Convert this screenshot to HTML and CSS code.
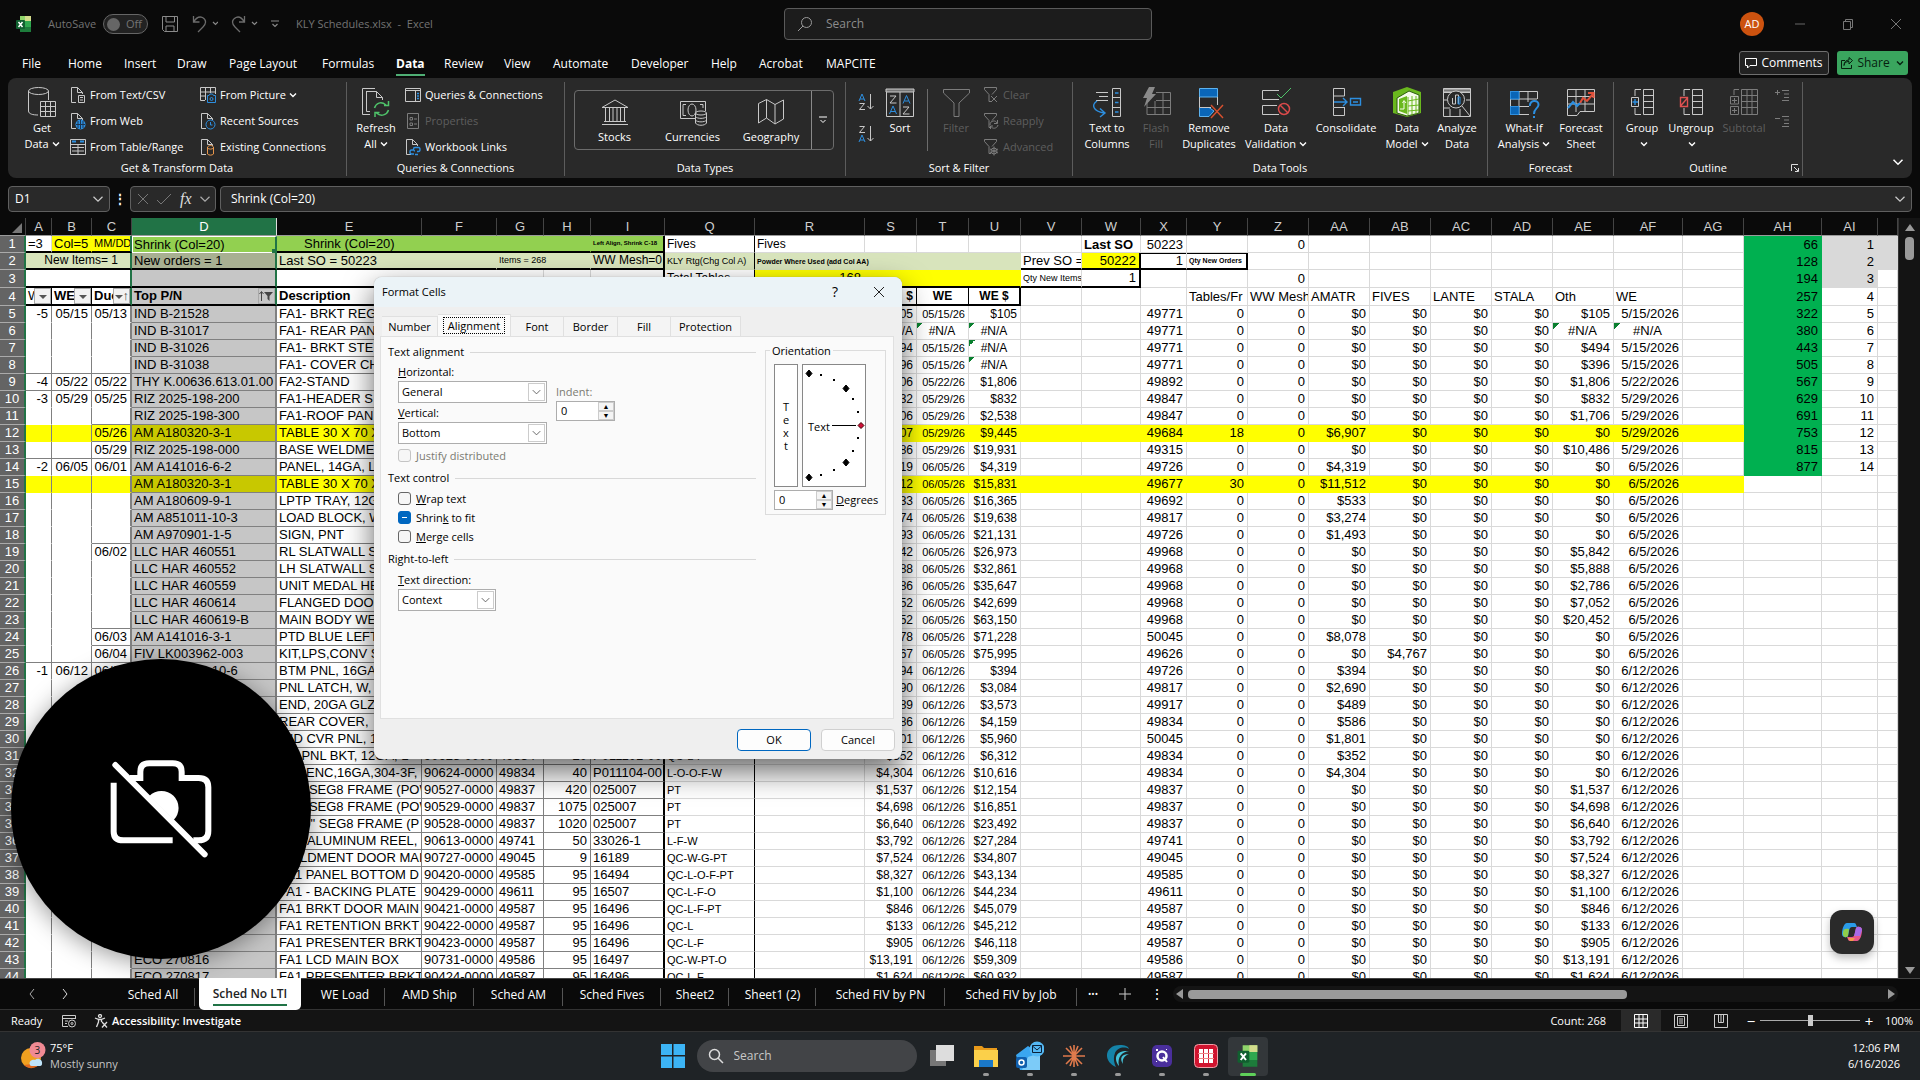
FILE: index.html
```html
<!DOCTYPE html>
<html lang="en">
<head>
<meta charset="utf-8">
<title>KLY Schedules.xlsx - Excel</title>
<link rel="stylesheet" href="styles.css">
</head>
<body>
<svg class="defs" aria-hidden="true">
  <symbol id="chev" viewBox="0 0 8 8"><path class="chev-line" d="M1 2.5 4 5.5 7 2.5" fill="none" stroke="currentColor"/></symbol>
  <symbol id="doc" viewBox="0 0 16 18"><path d="M6 16.500H1.500V1.500H7.500L12.500 6.500V8M7.500 1.500V6.500H12.500" fill="none" stroke="#c8c8c8"/></symbol>
  <symbol id="funnel" viewBox="0 0 16 18"><path d="M1.500 1.500H13.500V3.500L9 8.500M1.500 1.500V3.500L6 8.500V15.500H8" fill="none" stroke="#7c7c7c"/></symbol>
  <symbol id="excel" viewBox="0 0 16 18"><path d="M4 1h11v5H4z" fill="#8fd46a"/><path d="M9 1h6v5H9z" fill="#d3dc8c"/><path d="M4 6h11v6H4z" fill="#2fa84f"/><path d="M4 12h11v5H4z" fill="#1d7c3b"/><rect y="5" width="9" height="9" rx="1" fill="#10602f"/><path d="M2.500 7 6.500 12M6.500 7 2.500 12" stroke="#fff" stroke-width="1.500"/></symbol>
</svg>

<header class="titlebar">
  <svg class="app-icon" viewBox="0 0 16 18"><use href="#excel"/></svg>
  <span class="autosave">AutoSave</span>
  <button class="toggle"><i></i>Off</button>
  <div class="quick">
    <button aria-label="Save"><svg width="18" height="18" viewBox="0 0 18 18"><path d="M1.500 1.500H16.500V16.500H3.500L1.500 14.500ZM5 1.500V7H13.500V1.500M5 16.500V11H13V16.500" fill="none" stroke="#8a8a8a"/></svg></button>
    <button aria-label="Undo"><svg width="26" height="18" viewBox="0 0 26 18"><path d="M1.500 1V7H7.500M1.500 7C4 3 7 1 10.500 2.500 15 5 14 9 11 12L6 17" fill="none" stroke="#6c6c6c" stroke-width="1.300"/><path d="M21 7 23.500 9.500 26 7" fill="none" stroke="#8a8a8a" stroke-width="1.200"/></svg></button>
    <button aria-label="Redo"><svg width="27" height="18" viewBox="0 0 27 18"><path d="M13.500 1V7H8M13.500 7C11 3 8 1 5 2.500 0 5 1 9 4 12L9 17" fill="none" stroke="#6c6c6c" stroke-width="1.300"/><path d="M21 7 23.500 9.500 26 7" fill="none" stroke="#8a8a8a" stroke-width="1.200"/></svg></button>
    <button aria-label="Customize"><svg width="8" height="8" viewBox="0 0 8 8"><path d="M0 1H8M1.500 4 4 6.500 6.500 4" fill="none" stroke="#8a8a8a" stroke-width="1.200"/></svg></button>
  </div>
  <h1 class="doc-title">KLY Schedules.xlsx&nbsp; -&nbsp; Excel</h1>
  <label class="top-search"><svg width="16" height="16" viewBox="0 0 16 16"><circle cx="9.500" cy="6.500" r="5" fill="none" stroke="#9a9a9a"/><path d="M6 10 1 15" stroke="#9a9a9a"/></svg><input placeholder="Search" aria-label="Search commands"></label>
  <div class="window-tools">
    <span class="avatar">AD</span>
    <button aria-label="Minimize"><svg width="12" height="12"><path d="M1 6H11" stroke="#666"/></svg></button>
    <button aria-label="Restore"><svg width="12" height="12" fill="none" stroke="#777"><path d="M1.500 3.500h7v8h-7zM3.500 3V1.500h7v8H9"/></svg></button>
    <button aria-label="Close"><svg width="12" height="12"><path d="M1 1 11 11M11 1 1 11" stroke="#777"/></svg></button>
  </div>
</header>

<nav class="ribbon-tabs">
  <div class="tab-list">
    <a href="#">File</a><a href="#">Home</a><a href="#">Insert</a><a href="#">Draw</a><a href="#">Page Layout</a><a href="#">Formulas</a><a href="#" class="on">Data</a><a href="#">Review</a><a href="#">View</a><a href="#">Automate</a><a href="#">Developer</a><a href="#">Help</a><a href="#">Acrobat</a><a href="#">MAPCITE</a>
  </div>
  <button class="comments"><svg width="12" height="12" viewBox="0 0 12 12"><path d="M.5 1.500H11.500V8.500H5L2.500 11V8.500H.5Z" fill="none" stroke="#fff"/></svg>Comments</button>
  <button class="share"><svg width="12" height="12" viewBox="0 0 12 12"><path d="M4 3.500H.5V11.500H10.500V8M3 8.500C3.500 5.500 5 4.500 8 4.500V7L11.500 3.500 8 .5V3C5 3 3 5 3 8.500Z" fill="none" stroke="#06210f"/></svg>Share<svg class="chev"><use href="#chev"/></svg></button>
</nav>

<section class="ribbon">
  <div class="group g-get">
    <div class="row">
      <button class="big"><svg viewBox="0 0 30 30"><ellipse cx="11.500" cy="4" rx="10" ry="3.500"/><path d="M1.500 4V24C1.500 27 6 28 11 28M21.500 4V13"/><path d="M13.500 14.500H28.500V29.500H13.500ZM13.500 19.500H28.500M13.500 24.500H28.500M18.500 14.500V29.500M23.500 14.500V29.500"/></svg><span>Get<br>Data<svg class="chev"><use href="#chev"/></svg></span></button>
      <div class="smalls">
        <button><svg viewBox="0 0 16 18"><use href="#doc"/><path d="M8.500 9.500H14.500V16.500H8.500ZM10 11.500H13M10 14H13"/></svg>From Text/CSV</button>
        <button><svg viewBox="0 0 16 18"><use href="#doc"/><circle cx="10.500" cy="12.500" r="5" fill="#2d8fe0" stroke="none"/><path d="M6 12.500H15M10.500 8V17M8 9V16M13 9V16" stroke="#1b3550"/></svg>From Web</button>
        <button><svg viewBox="0 0 16 18"><path d="M.5 1.500H15.500V16.500H.5ZM.5 6.500H15.500M2 9.500H14M2 13H14M8 6V16"/><path d="M2 3.500H6M10 3.500H14" stroke="#2d8fe0" stroke-width="2"/></svg>From Table/Range</button>
      </div>
      <div class="smalls">
        <button><svg viewBox="0 0 16 18"><path d="M.5 1.500H15.500V8M.5 1.500V14.500H5M.5 6H15M.5 10H5M5.500 1V14M10.500 1V7"/><path d="M7.500 9.500H9L10 8H12.500L13.500 9.500H15.500V16.500H7.500Z" stroke="#2d8fe0"/><circle cx="11.500" cy="13" r="1.500" stroke="#2d8fe0"/></svg>From Picture<svg class="chev"><use href="#chev"/></svg></button>
        <button><svg viewBox="0 0 16 18"><use href="#doc"/><circle cx="10.500" cy="12.500" r="4.500" fill="#292929" stroke="#2d8fe0"/><path d="M10.500 10V13H12.500" stroke="#2d8fe0"/></svg>Recent Sources</button>
        <button><svg viewBox="0 0 16 18"><use href="#doc"/><path d="M7.500 9V16C9 17.500 12 17.500 13.500 16V9C12 7 9 7 7.500 9ZM7.500 10C9 11.500 12 11.500 13.500 10" stroke="#e8964a"/></svg>Existing Connections</button>
      </div>
    </div>
    <div class="caption">Get &amp; Transform Data</div>
  </div>
  <div class="group g-query">
    <div class="row">
      <button class="big"><svg viewBox="0 0 30 30"><path d="M9 27.500H1.500V1.500H14M9 24.500H5.500V4M5.500 5.500V4.500H15.500L21.500 10.500V13M15.500 4.500V10.500H21.500"/><path d="M13.500 21C15 16 20 14 25 18M27.500 14V18.500H23M27.500 23C26 28 20 30 15.500 26M14 30V25.500H18.500" stroke="#4fc36a" stroke-width="1.500"/></svg><span>Refresh<br>All<svg class="chev"><use href="#chev"/></svg></span></button>
      <div class="smalls">
        <button><svg viewBox="0 0 16 18"><path d="M.5 2.500H15.500V15.500H.5ZM.5 4.500H15.500M10.500 4V15"/><path d="M12 7.500H14M12 10H14M12 12.500H14" stroke="#2d8fe0" stroke-width="1.500"/></svg>Queries &amp; Connections</button>
        <button class="off"><svg viewBox="0 0 16 18"><path d="M2.500 1.500H13.500V16.500H2.500ZM5 5.500H7.500V8H5ZM5 11H7.500V13.500H5ZM9 7H12M9 12H12"/></svg>Properties</button>
        <button><svg viewBox="0 0 16 18"><use href="#doc"/><path d="M8 12H6.500C4.500 12 4.500 16 6.500 16H9M12 13.500H13.500C15.500 13.500 15.500 9.500 13.500 9.500H10C8 9.500 8 13 10 13M10 16.500H13" stroke="#2d8fe0" stroke-width="1.400"/></svg>Workbook Links</button>
      </div>
    </div>
    <div class="caption">Queries &amp; Connections</div>
  </div>
  <div class="group g-types">
    <div class="gallery">
      <button><svg viewBox="0 0 28 28"><path d="M1 9.500 14 2 27 9.500ZM4.500 10V23M8.500 10V23M12 10V23M16 10V23M19.500 10V23M23.500 10V23M3 23.500H25M1 26.500H27"/></svg>Stocks</button>
      <button><svg viewBox="0 0 28 28"><path d="M16 20.500H1.500V3.500H26.500V13M4 6.500H7M21 6.500H24V10M4 6.500V17.500H7"/><ellipse cx="13" cy="12" rx="4" ry="6"/><ellipse cx="22" cy="15" rx="5.500" ry="2"/><path d="M16.500 15V25C18 28 26 28 27.500 25V15M16.500 18.500C18 21 26 21 27.500 18.500M16.500 22C18 24.500 26 24.500 27.500 22"/></svg>Currencies</button>
      <button><svg viewBox="0 0 28 28"><path d="M1.500 5.500 9.500 1.500 18 6.500 26.500 2V21L18 26 9.500 20 1.500 25ZM9.500 1.500V20M18 6.500V26"/></svg>Geography</button>
      <button class="more" aria-label="More data types"><svg viewBox="0 0 8 8"><path d="M0 1H8M1.500 4 4 6.500 6.500 4"/></svg></button>
    </div>
    <div class="caption">Data Types</div>
  </div>
  <div class="group g-sort">
    <div class="row">
      <div class="az">
        <button aria-label="Sort A to Z"><svg viewBox="0 0 16 18"><path d="M1 8 4 1 7 8M2 6H6" stroke="#2d8fe0"/><path d="M1.500 10.500H6.500L1.500 16.500H7M12.500 1V16M9.500 13 12.500 16 15.500 13"/></svg></button>
        <button aria-label="Sort Z to A"><svg viewBox="0 0 16 18"><path d="M1 17 4 10 7 17M2 15H6" stroke="#2d8fe0"/><path d="M1.500 1.500H6.500L1.500 7.500H7M12.500 1V16M9.500 13 12.500 16 15.500 13"/></svg></button>
      </div>
      <button class="big"><svg viewBox="0 0 30 30"><path d="M1 2H29V5H1Z" fill="#777" stroke="#ccc"/><path d="M1.500 5V29.500H28.500V5M15 5V29M5 9H11L5 16H11.500M18 20H24L18 27H24.500"/><path d="M4.500 27 8 19 11.500 27M6 24.500H10M18 16.500 21.500 8.500 25 16.500M19.500 14H23.500" stroke="#2d8fe0"/></svg><span>Sort</span></button>
      <i class="bar"></i>
      <button class="big off"><svg viewBox="0 0 30 30"><path d="M2.500 2.500H28.500V6L18 16V29.500H13V16L2.500 6Z"/></svg><span>Filter</span></button>
      <div class="smalls">
        <button class="off"><svg viewBox="0 0 16 18"><use href="#funnel"/><path d="M8 10 14 16M14 10 8 16"/></svg>Clear</button>
        <button class="off"><svg viewBox="0 0 16 18"><use href="#funnel"/><path d="M7 13C7 8 13 8 14 11M14.500 8V11.500H11M15 13C14 17 9 17 8 14.500M7.500 17V14H10"/></svg>Reapply</button>
        <button class="off"><svg viewBox="0 0 16 18"><use href="#funnel"/><circle cx="11" cy="13" r="3"/><path d="M11 8.500V17.500M7 11 15 15M15 11 7 15"/></svg>Advanced</button>
      </div>
    </div>
    <div class="caption">Sort &amp; Filter</div>
  </div>
  <div class="group g-tools">
    <div class="row">
      <button class="big"><svg viewBox="0 0 30 30"><path d="M4 5.500H16M7 9.500H16M4 13.500H16M20.500 1.500H28.500V29.500H20.500ZM20.500 10.500H28.500M20.500 20.500H28.500"/><path d="M23 6H26.500M23 15.500H26.500M23 25H26.500M5 14C-1 18 1 24 12 26M8 21.500 13 26 8 30" stroke="#2d8fe0" stroke-width="1.400"/></svg><span>Text to<br>Columns</span></button>
      <button class="big off"><svg viewBox="0 0 30 30"><path d="M6 16V27.500H29.500V5.500H15M6 20.500H29.500M15 13.500H29.500M14 14V27M22 5V27"/><path d="M8 0H14L11 7H15L3 20 6 11H2Z" fill="#8a8a8a" stroke="none"/></svg><span>Flash<br>Fill</span></button>
      <button class="big"><svg viewBox="0 0 30 30"><path d="M5.500 1.500H23.500V10H5.500ZM5.500 20.500H15L20 24 15 29.500H5.500Z" fill="#0a66b8" stroke="#5db2ee"/><path d="M5.500 10V20.500H17M23.500 10V18"/><path d="M17 18 29 31M29 18 17 31" stroke="#d9512f" stroke-width="1.400"/></svg><span>Remove<br>Duplicates</span></button>
      <button class="big"><svg viewBox="0 0 30 30"><path d="M18 3.500H1.500V12.500H18M16 18.500H1.500V27.500H18"/><path d="M16 7 20 11 30 1" stroke="#4fc36a"/><circle cx="23" cy="22" r="5.500" stroke="#d94a4a" stroke-width="1.500"/><path d="M19 18 27 26" stroke="#d94a4a" stroke-width="1.500"/></svg><span>Data<br>Validation<svg class="chev"><use href="#chev"/></svg></span></button>
      <button class="big"><svg viewBox="0 0 30 30"><path d="M2.500 9V1.500H13.500V9H2.500M2.500 9V20M13.500 20V28.500H2.500V20.500H13.500"/><path d="M3 15H16M12 11 16 15 12 19M19.500 11.500H29.500V18H19.500ZM22 15H27" stroke="#2d8fe0" stroke-width="1.400"/></svg><span>Consolidate</span></button>
      <button class="big"><svg viewBox="0 0 30 30"><path d="M1 5 15 0 29 5V26L15 30 1 26Z" fill="#6ab81e" stroke="none"/><path d="M5 11 17 4 27 8V26L15 29 5 26Z" fill="#f4fbe8" stroke="#2e5c0d"/><path d="M16 10V28M20 9V28M24 9V27M16 14 27 12M16 19 27 18M16 24 27 23" stroke="#6ab81e"/><path d="M7 12 15 9V27L7 24Z" fill="#6ab81e" stroke="none"/><path d="M8 22H12V14M10.500 16 12 13.500 14 16" stroke="#f4fbe8"/></svg><span>Data<br>Model<svg class="chev"><use href="#chev"/></svg></span></button>
      <button class="big"><svg viewBox="0 0 30 30"><path d="M1.500 1.500H28.500V29.500H1.500ZM1.500 5.500H28.500M1.500 13H6M1.500 21H8M8 22V29M18 22V29M24 13H28"/><path d="M1.500 2H28.500V5H1.500Z" fill="#777"/><circle cx="14" cy="12.500" r="8.500" fill="#292929"/><path d="M20 19 28 29"/><path d="M10.500 11V17H13.500V8H16.500V17"/><path d="M16 10H18V17H16Z" stroke="#2d8fe0"/></svg><span>Analyze<br>Data</span></button>
    </div>
    <div class="caption">Data Tools</div>
  </div>
  <div class="group g-cast">
    <div class="row">
      <button class="big"><svg viewBox="0 0 30 30"><path d="M1.500 4.500H28.500V12M1.500 4.500V27.500H20M1.500 12H28M1.500 19.500H20M10 4V27M19 4V15"/><path d="M1.500 4.500H10V12H1.500ZM1.500 19.500H10V27.500H1.500Z" fill="#0a66b8" stroke="#2d8fe0"/><path d="M21 19C20 13 30 12 29.500 18 29 22 25 21 25 27M25 29V31" stroke="#2d8fe0" stroke-width="2"/></svg><span>What-If<br>Analysis<svg class="chev"><use href="#chev"/></svg></span></button>
      <button class="big"><svg viewBox="0 0 30 30"><path d="M1.500 2.500H28.500V24.500H14L11 28.500H1.500ZM1.500 9.500H28M1.500 17H28M10 2V25M19 2V25"/><path d="M2 21 7 15 11 19 15 15" stroke="#2d8fe0" stroke-width="2"/><path d="M14 16 17 11 21 14 27 7M22 6H27.500V11" stroke="#e0503a" stroke-width="2"/></svg><span>Forecast<br>Sheet</span></button>
    </div>
    <div class="caption">Forecast</div>
  </div>
  <div class="group g-outline">
    <div class="row">
      <button class="big"><svg viewBox="0 0 30 30"><path d="M16.500 2.500H26.500V27.500H16.500ZM16.500 8.500H26.500M16.500 14.500H26.500M16.500 20.500H26.500M14 2.500H8V9M14 27.500H8V21"/><path d="M4.500 10.500H11.500V19.500H4.500Z"/><path d="M5.500 15H11M8 12V18" stroke="#2d8fe0" stroke-width="1.400"/></svg><span>Group<br><svg class="chev"><use href="#chev"/></svg></span></button>
      <button class="big"><svg viewBox="0 0 30 30"><path d="M16.500 2.500H26.500V27.500H16.500ZM16.500 8.500H26.500M16.500 14.500H26.500M16.500 20.500H26.500M14 2.500H8V9M14 27.500H8V21"/><path d="M4.500 10.500H11.500V19.500H4.500ZM4.500 19 11.500 11" stroke="#e05252" stroke-width="1.400"/></svg><span>Ungroup<br><svg class="chev"><use href="#chev"/></svg></span></button>
      <button class="big off"><svg viewBox="0 0 30 30"><path d="M12.500 2.500H28.500V27.500H12.500ZM12.500 8.500H28.500M12.500 14.500H28.500M12.500 20.500H28.500M18 2V27M23 2V27M10 2.500H5V8M1.500 9.500H9.500V17H1.500ZM1.500 19.500H9.500V27.500H1.500ZM3 13.500H8M5.500 11V16M3 23.500H8M5.500 21V26"/></svg><span>Subtotal</span></button>
      <div class="smalls">
        <button class="off" aria-label="Show detail"><svg viewBox="0 0 16 18"><path d="M0 6.500H5M2.500 4V9M7 4.500H14M9 8H14M9 11.500H14M7 14.500H14"/></svg></button>
        <button class="off" aria-label="Hide detail"><svg viewBox="0 0 16 18"><path d="M0 6.500H5M7 4.500H14M9 8H14M9 11.500H14M7 14.500H14"/></svg></button>
      </div>
    </div>
    <div class="caption">Outline<button class="launch" aria-label="Outline settings"><svg width="8" height="8" viewBox="0 0 8 8"><path d="M.5 7V.5H7M3 3 7 7M7.500 4V7.500H4" fill="none" stroke="#ddd"/></svg></button></div>
  </div>
  <button class="collapse" aria-label="Collapse ribbon"><svg width="12" height="12" viewBox="0 0 8 8"><use href="#chev"/></svg></button>
</section>

<div class="formula-row">
  <label class="namebox"><input value="D1" aria-label="Name box"><svg viewBox="0 0 8 8"><use href="#chev"/></svg></label>
  <span class="grip">⋮</span>
  <div class="fx">
    <button aria-label="Cancel entry"><svg width="12" height="12"><path d="M1 1 11 11M11 1 1 11" stroke="#777"/></svg></button>
    <button aria-label="Enter"><svg width="16" height="12"><path d="M1 7 5 11 15 1" stroke="#777" fill="none"/></svg></button>
    <button class="fn">fx</button>
    <svg width="12" height="12" viewBox="0 0 8 8"><use href="#chev"/></svg>
  </div>
  <label class="formula"><input value="Shrink (Col=20)" aria-label="Formula"><svg viewBox="0 0 8 8"><use href="#chev"/></svg></label>
</div>

<main class="workspace">
  <div class="sheet">
    <table class="grid">
      <colgroup><col class="w26"><col class="w26"><col class="w40"><col class="w40"><col class="w145"><col class="w145"><col class="w75"><col class="w47"><col class="w47"><col class="w74"><col class="w90"><col class="w110"><col class="w52"><col class="w52"><col class="w52"><col class="w61"><col class="w59"><col class="w46"><col class="w61"><col class="w61"><col class="w61"><col class="w61"><col class="w61"><col class="w61"><col class="w61"><col class="w69"><col class="w61"><col class="w78"><col class="w56"><col></colgroup>
      <thead><tr><th class="corner"></th><th>A</th><th>B</th><th>C</th><th class="picked">D</th><th>E</th><th>F</th><th>G</th><th>H</th><th>I</th><th>Q</th><th>R</th><th>S</th><th>T</th><th>U</th><th>V</th><th>W</th><th>X</th><th>Y</th><th>Z</th><th>AA</th><th>AB</th><th>AC</th><th>AD</th><th>AE</th><th>AF</th><th>AG</th><th>AH</th><th>AI</th><th></th></tr></thead>
      <tbody>
        <tr class="b2"><th>1</th><td class="thick flush">=3</td><td class="yel thick">Col=5</td><td class="yel thick gr s11">MM/DD</td><td class="lime active">Shrink (Col=20)<i class="handle"></i></td><td class="lime thick inset" colspan="4">Shrink (Col=20)</td><td class="lime thick vr tiny">Left Align, Shrink C-18</td><td class="bk s12">Fives</td><td class="s12">Fives</td><td></td><td></td><td></td><td></td><td class="bold">Last SO</td><td class="r">50223</td><td></td><td class="r">0</td><td></td><td></td><td></td><td></td><td></td><td></td><td></td><td class="green r">66</td><td class="gray r">1</td><td class="gray"></td></tr>
        <tr class="b2"><th>2</th><td class="sage thick r pr gr s12" colspan="3">New Items= 1</td><td class="sagesel thick er">New orders = 1</td><td class="sage thick" colspan="2">Last SO = 50223</td><td class="sage thick s9" colspan="2">Items = 268</td><td class="sage thick vr s12">WW Mesh=0</td><td class="sage bk s9">KLY Rtg(Chg Col A)</td><td class="sage mini" colspan="4">Powder Where Used (add Col AA)</td><td class="thick">Prev SO =</td><td class="yel thick vr r">50222</td><td class="thick topk r">1</td><td class="thick topk vr mini">Qty New Orders</td><td></td><td></td><td></td><td></td><td></td><td></td><td></td><td></td><td class="green r">128</td><td class="gray r">2</td><td class="gray"></td></tr>
        <tr class="b2 t18"><th>3</th><td class="thick gr" colspan="3"></td><td class="sel thick er"></td><td class="thick" colspan="3"></td><td class="thick"></td><td class="thick vr"></td><td class="thick bk s12">Total Tables</td><td class="yel thick r">168</td><td class="yel thick" colspan="3"></td><td class="thick s9">Qty New Items</td><td class="thick vr r">1</td><td></td><td></td><td class="r">0</td><td></td><td></td><td></td><td></td><td></td><td></td><td></td><td class="green r">194</td><td class="gray r">3</td><td></td></tr>
        <tr class="t18 heads"><th>4</th><td class="thick vk">W<button class="filter" aria-label="Filter A"></button></td><td class="thick vk bold">WE<button class="filter" aria-label="Filter B"></button></td><td class="thick gr bold">Due<button class="filter sorted" aria-label="Filter C">↑</button></td><td class="sel thick er bold">Top P/N<button class="filter funnel" aria-label="Filter D"><svg width="14" height="12" viewBox="0 0 14 12"><path d="M2.500 11V2M.5 4 2.500 1.500 4.500 4" stroke="#444" fill="none"/><path d="M5 2H14L10.500 6V11L8.500 9V6Z" fill="#444"/></svg></button></td><td class="thick bold" colspan="4">Description</td><td class="thick vr"></td><td class="thick bk"></td><td class="thick"></td><td class="thick vk bold r s12">$</td><td class="thick vk bold c s12">WE</td><td class="thick vr bold c s12">WE $</td><td></td><td></td><td></td><td>Tables/Fr</td><td>WW Mesh</td><td>AMATR</td><td>FIVES</td><td>LANTE</td><td>STALA</td><td>Oth</td><td>WE</td><td></td><td class="green r">257</td><td class="r">4</td><td></td></tr>
      </tbody>
      <tbody id="lines"></tbody>
    </table>
  </div>
  <div class="vscroll"><i class="up"></i><i class="thumb"></i><i class="down"></i></div>

  <button class="copilot" aria-label="Copilot"><svg width="24" height="24" viewBox="0 0 24 24"><path d="M7 3H14C16 3 16 5 17 7H12C9 7 9 12 8 16 7 18 2 18 2 14 2 9 4 3 7 3Z" fill="#2a9be8"/><path d="M3 12C3 9 6 8 9 9L8 16C7 18 2 18 3 12Z" fill="#8fce4a"/><path d="M17 21H10C8 21 8 19 7 17H12C15 17 15 12 16 8 17 6 22 6 22 10 22 15 20 21 17 21Z" fill="#e8588c"/><path d="M16 8C17 6 22 6 22 10L20 16H14Z" fill="#a86ae8"/><path d="M8 18H15L13 21H10Z" fill="#f39a4c"/></svg></button>

  <form class="dialog" role="dialog" aria-label="Format Cells">
    <div class="dlg-title"><span>Format Cells</span><button type="button">?</button><button type="button" aria-label="Close dialog"><svg width="12" height="12"><path d="M1 1 11 11M11 1 1 11" stroke="#222"/></svg></button></div>
    <div class="dlg-tabs"><button type="button">Number</button><button type="button" class="on"><span>Alignment</span></button><button type="button">Font</button><button type="button">Border</button><button type="button">Fill</button><button type="button">Protection</button></div>
    <div class="panel">
      <div class="left">
        <h2>Text alignment</h2>
        <div class="align">
          <div class="stack">
            <label for="hz"><u>H</u>orizontal:</label>
            <div class="combo"><select id="hz"><option>General</option></select><svg viewBox="0 0 8 8"><use href="#chev"/></svg></div>
            <label for="vt"><u>V</u>ertical:</label>
            <div class="combo"><select id="vt"><option>Bottom</option></select><svg viewBox="0 0 8 8"><use href="#chev"/></svg></div>
          </div>
          <div class="stack indent">
            <label for="ind" class="dim">Indent:</label>
            <div class="spin"><input id="ind" value="0"><span><button type="button" aria-label="More indent">▲</button><button type="button" aria-label="Less indent">▼</button></span></div>
          </div>
        </div>
        <label class="check dim just"><input type="checkbox" disabled>Justify distributed</label>
        <h2>Text control</h2>
        <div class="checks">
          <label class="check"><input type="checkbox"><span><u>W</u>rap text</span></label>
          <label class="check"><input type="checkbox" class="mixed"><span>Shrin<u>k</u> to fit</span></label>
          <label class="check"><input type="checkbox"><span><u>M</u>erge cells</span></label>
        </div>
        <h2>Right-to-left</h2>
        <div class="stack dir">
          <label for="dir"><u>T</u>ext direction:</label>
          <div class="combo narrow"><select id="dir"><option>Context</option></select><svg viewBox="0 0 8 8"><use href="#chev"/></svg></div>
        </div>
      </div>
      <fieldset class="orient">
        <legend>Orientation</legend>
        <div class="dials">
          <button type="button" class="vert">T<br>e<br>x<br>t</button>
          <div class="dial"><svg width="62" height="121" viewBox="0 0 62 121"><path d="M6 5 9 8.500 6 12 3 8.500ZM43 20 46 23.500 43 27 40 23.500ZM43 94 46 97.500 43 101 40 97.500ZM6 109 9 112.500 6 116 3 112.500Z" stroke="#000"/><path d="M17 9h2v2h-2zM30 14h2v2h-2zM49 33h2v2h-2zM54 46h2v2h-2zM54 72h2v2h-2zM49 85h2v2h-2zM30 104h2v2h-2zM17 109h2v2h-2z"/><path d="M29 60.500H53" stroke="#000"/><path d="M58 57.500 61 60.500 58 63.500 55 60.500Z" fill="#d0103a" stroke="#400"/><text x="5" y="66" class="dial-text">Text</text></svg></div>
        </div>
        <div class="deg"><div class="spin"><input id="deg" value="0"><span><button type="button" aria-label="More degrees">▲</button><button type="button" aria-label="Fewer degrees">▼</button></span></div><label for="deg"><u>D</u>egrees</label></div>
      </fieldset>
    </div>
    <div class="actions"><button type="button" class="ok">OK</button><button type="button">Cancel</button></div>
  </form>

  <div class="camera-off"><svg viewBox="35 57 900 900" fill="none" stroke="#fff" stroke-width="18"><path d="M343 428V575Q343 601 372 601H520M392 414H423V395Q423 370 450 370H520Q547 370 547 395V414H598Q627 414 627 442V573Q627 601 598 601H582"/><path d="M450 468A47 47 0 0 1 523 540Z" fill="#fff" stroke="none"/><path d="M348 375 616 643" stroke-linecap="round"/></svg></div>
</main>

<nav class="sheet-tabs">
  <button class="arrow dimmed" aria-label="Previous sheets"><svg width="8" height="12"><path d="M6 1 2 6 6 11" stroke="#aaa" fill="none"/></svg></button>
  <button class="arrow" aria-label="Next sheets"><svg width="8" height="12"><path d="M2 1 6 6 2 11" stroke="#ddd" fill="none"/></svg></button>
  <div class="tabs"><a href="#">Sched All</a><a href="#" class="on"><span>Sched No LTI</span></a><a href="#">WE Load</a><a href="#">AMD Ship</a><a href="#">Sched AM</a><a href="#">Sched Fives</a><a href="#">Sheet2</a><a href="#">Sheet1 (2)</a><a href="#">Sched FIV by PN</a><a href="#">Sched FIV by Job</a></div>
  <button class="tb" aria-label="More sheets">•••</button><button class="tb" aria-label="New sheet"><svg width="12" height="12"><path d="M6 0V12M0 6H12" stroke="#ccc"/></svg></button><span class="tb">⋮</span>
  <div class="hscroll"><i class="lt"></i><i class="thumb"></i><i class="rt"></i></div>
</nav>

<footer class="status">
  <span class="ready">Ready</span>
  <svg class="macro" width="14" height="14" viewBox="0 0 14 14" fill="none" stroke="#ccc"><path d="M6 12.500H.5V1.500H13.500V5M.5 4.500H13M3 7H6M3 9.500H5"/><circle cx="10" cy="9.500" r="3.500"/><circle cx="10" cy="9.500" r="1"/></svg>
  <svg class="acc" width="14" height="14" viewBox="0 0 14 14" fill="none" stroke="#ddd" stroke-width="1.300"><circle cx="6" cy="2" r="1.500"/><path d="M1 4 4.500 5.500V8L2.500 13M11 4 7.500 5.500V8M4.500 5.500H7.500M8 8 13 13.500M13 8 8 13.500"/></svg>
  <b>Accessibility: Investigate</b>
  <span class="count">Count: 268</span>
  <div class="views">
    <button class="on" aria-label="Normal view"><svg width="14" height="14" fill="none" stroke="#fff"><path d="M.5.5H13.500V13.500H.5ZM.5 5H13M.5 9H13M5 0V13M9 0V13"/></svg></button>
    <button aria-label="Page layout view"><svg width="14" height="14" fill="none" stroke="#ccc"><path d="M.5.5H13.500V13.500H.5ZM3.500 2.500H10.500V11.500H3.500ZM5 5H9M5 7H9M5 9H9"/></svg></button>
    <button aria-label="Page break view"><svg width="14" height="14" fill="none" stroke="#ccc"><path d="M.5.5H13.500V13.500H.5ZM4.500 0V8.500H9.500V0M7 1V8"/></svg></button>
  </div>
  <button class="zoom-step">−</button><input class="zoom" type="range" aria-label="Zoom" value="50"><button class="zoom-step">+</button>
  <span class="pct">100%</span>
</footer>

<footer class="taskbar">
  <div class="weather">
    <svg width="26" height="28" viewBox="0 0 26 28"><circle cx="11" cy="16" r="10" fill="#f0a020"/><path d="M4 23A10 10 0 0 0 20 21Z" fill="#e06a20"/><path d="M10 23C8 18 14 17 15 18 18 15 23 18 22 22Q22 24 19 24H12Q10 24 10 23Z" fill="#bfe4fa"/><circle cx="17.500" cy="8" r="8" fill="#f08a94"/><text x="14.500" y="12" class="badge">3</text></svg>
    <p>75°F<br><span>Mostly sunny</span></p>
  </div>
  <div class="center">
    <button class="start" aria-label="Start"><svg width="24" height="24"><path d="M0 0H11V11H0ZM12.500 0H24V11H12.500ZM0 12.500H11V24H0ZM12.500 12.500H24V24H12.500Z" fill="#3cb4f5"/></svg></button>
    <label class="task-search"><svg width="16" height="16" viewBox="0 0 16 16"><circle cx="6.500" cy="6.500" r="5" fill="none" stroke="#ddd" stroke-width="1.500"/><path d="M10 10 15 15" stroke="#ddd" stroke-width="1.500"/></svg><input placeholder="Search" aria-label="Search"></label>
    <button aria-label="Task view"><svg width="24" height="24"><path d="M0 6H16V22H0Z" fill="#777"/><path d="M6 1H24V17H6Z" fill="#ddd"/></svg></button>
    <button class="run" aria-label="Files"><svg width="24" height="24"><path d="M0 2H8L10 4H23V10H0Z" fill="#e89a1a"/><path d="M0 6H24V23H0Z" fill="#fbd04a"/><path d="M5 16H19V23H5Z" fill="#1a78c8"/></svg></button>
    <button class="run" aria-label="Mail"><svg width="28" height="30" viewBox="0 0 28 30"><path d="M0 14 12 5 24 13V27Q24 29 21 29H4Z" fill="#3aa6f0"/><path d="M12 16 24 12V29H6Z" fill="#7ccbf8"/><circle cx="21" cy="8" r="7.500" fill="#54b8f4"/><path d="M16.500 4.500H25.500V11.500H16.500ZM16.500 5 21 9 25.500 5" fill="none" stroke="#0a2038"/><rect y="16" width="11" height="11" rx="2" fill="#0f5fae"/><circle cx="5.500" cy="21.500" r="2.500" fill="none" stroke="#fff" stroke-width="1.500"/></svg></button>
    <button class="run" aria-label="Assistant"><svg width="24" height="24" viewBox="0 0 24 24"><path d="M12 1V23M1 12H23M4 4 20 20M20 4 4 20M8 2 16 22M16 2 8 22" stroke="#e07a4c" stroke-width="1.600"/></svg></button>
    <button class="run" aria-label="Swirl"><svg width="24" height="24" viewBox="0 0 24 24"><path d="M10 23C-4 17-1 1 14 1 19 1 22 2 23 5 18 2 11 4 9 9 7 14 8 19 10 23Z" fill="#1583a8"/><path d="M13 22C7 14 10 6 23 7 16 8 11 13 13 22ZM17 20C13 14 16 10 23 10 18 12 16 15 17 20Z" fill="#45c3da"/></svg></button>
    <button class="run" aria-label="Q"><svg width="20" height="22" viewBox="0 0 20 22"><rect width="20" height="22" rx="5" fill="#4a2f9c"/><circle cx="10" cy="11" r="4.500" fill="none" stroke="#fff" stroke-width="2.500"/><path d="M11 12 15 17" stroke="#fff" stroke-width="2"/><path d="M4 4h2v2h-2zM14 4h1v1h-1zM4 16h1v1h-1z" fill="#fff"/></svg></button>
    <button class="run" aria-label="Columns"><svg width="24" height="24" viewBox="0 0 24 24"><rect x=".5" y=".5" width="23" height="23" rx="4" fill="#d0142f" stroke="#f0a0a8"/><path d="M5 5H9V19H5ZM10 5H14V19H10ZM15 5H19V19H15Z" fill="#fff"/><path d="M4 9.500H20M4 14.500H20" stroke="#e88"/></svg></button>
    <button class="run cur" aria-label="Excel"><svg width="22" height="24" viewBox="0 0 16 18"><use href="#excel"/></svg></button>
  </div>
  <time>12:06 PM<br>6/16/2026</time>
</footer>
<script src="sheet.js"></script>
</body>
</html>
```
FILE: styles.css
```css
*{box-sizing:border-box}
body{margin:0;height:100vh;min-height:600px;display:flex;flex-direction:column;background:#0a0a0a;color:#fff;font:12px/16px "Open Sans","Noto Sans",sans-serif;overflow:hidden}
button,input,select{font:inherit;color:inherit;background:none;border:0;padding:0;margin:0;min-width:0}
a{color:inherit;text-decoration:none}
p,h1,h2{margin:0;font-weight:400;font-size:inherit}
i{display:block}
.defs{position:absolute;width:0;height:0}
.chev{width:8px;height:8px;margin-left:3px}
.chev-line{stroke-width:var(--chev-weight,1.4px)}

/* title bar */
.titlebar{flex:none;height:48px;display:grid;grid-template-columns:32px 55px 58px 135px 488fr 368px 750fr;align-items:center;padding:0 18px 0 16px;color:#747474;font-size:11px}
.app-icon{width:16px;height:18px}
.toggle{width:45px;height:20px;border:1px solid #666;border-radius:10px;display:flex;align-items:center;gap:6px;padding-left:3px;background:#222}
.toggle i{width:13px;height:13px;border-radius:50%;background:#666}
.quick{display:flex;align-items:center;gap:13px}
.quick button,.window-tools button{display:flex}
.top-search{height:32px;border:1px solid #5a5a5a;border-radius:4px;background:#1c1c1c;display:flex;align-items:center;gap:13px;padding-left:12px;font-size:12px}
.top-search input{flex:1}
.top-search input::placeholder{color:#8c8c8c;opacity:1}
.window-tools{display:flex;justify-content:flex-end;align-items:center;gap:36px}
.avatar{width:24px;height:24px;border-radius:50%;background:#cc520f;color:#fff;font-size:11px;line-height:24px;text-align:center;margin-right:-6px}

/* ribbon tabs */
.ribbon-tabs{flex:none;height:30px;display:flex;align-items:center;gap:8px;padding:0 12px 0 22px}
.tab-list{flex:1;display:grid;grid-template-columns:46px 56px 53px 52px 93px 74px 48px 60px 49px 78px 80px 48px 67px auto;justify-content:start}
.tab-list a{justify-self:start;line-height:20px;padding-top:4px;white-space:nowrap;border-bottom:2px solid transparent}
.tab-list .on{font-weight:700;border-color:#4fae74}
.comments,.share{height:24px;border-radius:3px;display:flex;align-items:center;justify-content:center;gap:4px}
.comments{width:90px;border:1px solid #707070;background:#222}
.share{width:71px;background:#3aa55e;color:#06210f}
.share .chev{margin-left:2px}

/* ribbon */
.ribbon{flex:none;height:100px;margin:0 8px;border-radius:8px;background:#292929;display:flex}
.group{flex:none;margin:4px 0 2px;border-right:1px solid #5c5c5c;display:flex;flex-direction:column}
.row{height:78px;display:flex}
.caption{font-size:11px;text-align:center;position:relative}
.group svg{fill:none;stroke:#c8c8c8}
.group svg.chev{stroke:none}
.big{padding-top:5px;display:flex;flex-direction:column;align-items:center;white-space:nowrap;line-height:16px;font-size:11px}
.big>svg{width:30px;height:30px;flex:none;margin-bottom:3px;overflow:visible}
.smalls{display:flex;flex-direction:column}
.smalls button{height:26px;display:flex;align-items:center;gap:4px;white-space:nowrap;font-size:11px}
.smalls button>svg:first-child{width:16px;height:18px}
.smalls .chev{margin-left:-1px}
.off{color:#5e5e5e}
.group .off>svg{stroke:#7c7c7c}
.g-get{width:339px}
.g-get .row{display:grid;grid-template-columns:62px 130px auto;justify-content:start}
.g-get .big{padding-left:6px}
.g-query{width:218px}
.g-query .row{display:grid;grid-template-columns:58px auto;justify-content:start}
.g-types{width:281px}
.gallery{height:60px;margin:8px 11px 10px 9px;border:1px solid #6c6c6c;border-radius:4px;display:grid;grid-template-columns:79px 77px 80px 1fr}
.gallery button{display:flex;flex-direction:column;align-items:center;padding-top:7px;gap:3px;font-size:11px}
.gallery svg{width:28px;height:28px}
.gallery .more{border-left:1px solid #8a8a8a;justify-content:center;padding:0}
.gallery .more svg{width:8px;height:8px;stroke:#fff;overflow:visible}
.g-sort{width:227px}
.g-sort .row{display:grid;grid-template-columns:18px 48px 5px 54px auto;justify-content:start;padding-left:12px}
.az{display:flex;flex-direction:column;gap:14px;padding-top:11px}
.az svg{display:block;width:16px;height:18px}
.bar{width:1px;margin:7px 0 9px 3px;background:#6c6c6c}
.g-tools{width:415px}
.g-tools .row{display:grid;grid-template-columns:52px 46px 60px 74px 66px 56px 44px;padding-left:8px}
.g-cast{width:126px}
.g-cast .row{display:grid;grid-template-columns:58px 56px;padding-left:7px}
.g-outline{width:189px}
.g-outline .row{display:grid;grid-template-columns:46px 52px 54px auto;padding-left:5px}
.g-outline .smalls{padding-left:4px}
.launch{position:absolute;right:3px;top:0}
.collapse{margin:auto 8px 6px auto;--chev-weight:1px}

/* formula row */
.formula-row{flex:none;height:40px;padding:8px 8px 6px;display:grid;grid-template-columns:102px 20px 86px 1fr;align-items:center;--chev-weight:.8px}
.namebox,.fx,.formula{height:26px;border:1px solid #5f5f5f;border-radius:4px;background:#292929;display:flex;align-items:center}
.namebox svg,.formula svg{width:12px;height:12px;margin-right:5px;color:#ccc}
.namebox input,.formula input{flex:1;padding-left:6px}
.formula{margin-left:4px}
.formula input{padding-left:10px}
.grip{text-align:center;font-weight:700}
.fx{justify-content:space-between;padding:0 4px 0 6px;color:#aaa}
.fx button{display:flex}
.fx .fn{font:italic 16px/20px "Liberation Serif",serif;color:#ddd}

/* worksheet */
.workspace{flex:1;min-height:0;display:flex;position:relative;overflow:hidden}
.sheet{flex:1;min-width:0;overflow:hidden;background:#fff;color:#000}
.grid{width:100%;table-layout:fixed;border-collapse:separate;border-spacing:0;font:13px/16px "Liberation Sans",Arial,sans-serif}
.w26{width:26px}.w40{width:40px}.w145{width:145px}.w75{width:75px}.w47{width:47px}.w74{width:74px}.w90{width:90px}.w110{width:110px}.w52{width:52px}.w61{width:61px}.w59{width:59px}.w46{width:46px}.w69{width:69px}.w78{width:78px}.w56{width:56px}
.grid th,.grid td{height:17px;padding:0 2px;white-space:nowrap;overflow:hidden;border-right:1px solid #d9d9d9;border-bottom:1px solid #d9d9d9;position:relative;text-align:left}
.grid thead th{height:18px;line-height:17px;padding:0;background:#0a0a0a;color:#cfcfcf;font-weight:400;text-align:center;border-color:#444 #444 #9a9a9a}
.grid thead .picked{background:#217346;color:#fff;border-right-color:#ddd}
.grid thead .corner::after{content:"";position:absolute;right:3px;bottom:2px;border:5px solid;border-color:transparent #777 #777 transparent}
.grid tbody th{background:#646464;color:#fff;font-weight:400;text-align:center;padding:0;border-right:2px solid #217346;border-bottom-color:#aaa}
.grid .b2 td,.grid .heads td{line-height:15px}
.grid .t18 td,.grid .t18 th{height:18px;line-height:16px}
.grid .r{text-align:right;padding-right:3px}
.grid .pr{padding-right:12px}
.grid .c{text-align:center}
.grid .bold{font-weight:700}
.grid .s12{font-size:12px}
.grid .s11{font-size:11px}
.grid .s9{font-size:9px}
.grid .mini{font-size:7px;font-weight:700}
.grid .tiny{font-size:6px;font-weight:700}
.grid .flush{text-align:left}
.grid .inset{padding-left:27px}
.grid .yel{background:#ff0;border-color:#ff0}
.grid .lime{background:#92d050;border-color:#92d050}
.grid .sage{background:#d8e4bc;border-color:#d8e4bc}
.grid .sagesel{background:#a8b092}
.grid .sel{background:#c6c6c6}
.grid .green{background:#00b050;border-color:#00b050}
.grid .gray{background:#d9d9d9}
.grid .thick{border-bottom:2px solid #000}
.grid .topk{box-shadow:inset 0 1px #000}
.grid .vr{border-right:2px solid #000}
.grid .vk{border-right:1px solid #000}
.grid .bk{border-right:1px solid #000}
.grid .gr,.grid .er{border-right:2px solid #217346}
.grid .active{border:1px solid #fff;border-right:2px solid #217346;overflow:visible;line-height:14px;padding-left:1px}
.handle{position:absolute;right:-3px;bottom:-3px;width:6px;height:6px;background:#217346}
.filter{position:absolute;right:0;top:0;width:17px;height:16px;background:#f2f2f2;border:1px solid #aaa;line-height:14px;color:#444}
.filter::before{content:"";position:absolute;left:4px;top:6px;border:4px solid transparent;border-top-color:#555;border-bottom:0}
.filter.sorted::before{left:1px}
.filter.sorted{text-align:right}
.filter.funnel{background:#c6c6c6;display:flex;align-items:center}
.filter.funnel::before{content:none}
/* body lines */
.grid .ln{border-right-color:#808080;border-bottom-color:#808080}
.grid .open{border-bottom-color:transparent}
.grid .k2{border-right:2px solid #000}
.grid .hot .paint{background-color:#ff0;border-bottom-color:#ff0}
.grid .hot .paint:not(.ln):not(.bk){border-right-color:#ff0}
.grid .hot .ln.rule,.grid .hot .ln.full{border-bottom-color:#808080}
.grid .hot .sel{background:#c8c800}
.grid .err{text-align:center;background:linear-gradient(to bottom right,#0a8030 50%,transparent 50%) 0 0/6px 6px no-repeat}

.vscroll{flex:none;width:22px;background:#141414;border-left:1px solid #333;display:flex;flex-direction:column;align-items:center;padding:6px 0 4px}
.up,.down,.lt,.rt{border:5px solid transparent}
.up{border-top:0;border-bottom:7px solid #999}
.down{border-bottom:0;border-top:7px solid #999;margin-top:auto}
.vscroll .thumb{width:9px;height:23px;border-radius:4px;background:#9a9a9a;margin-top:6px}
.copilot{position:absolute;right:46px;bottom:24px;width:44px;height:44px;border-radius:12px;background:#2a2a2a;display:flex;align-items:center;justify-content:center;box-shadow:0 4px 8px #0004}
.camera-off{position:absolute;left:11px;bottom:19px;width:300px;height:300px;border-radius:50%;background:#000;box-shadow:0 4px 24px #0006}
.camera-off svg{display:block}

/* format cells dialog */
.dialog{position:absolute;left:374px;top:59px;width:528px;height:482px;display:flex;flex-direction:column;border-radius:8px;background:#efefef;color:#000;font-size:11px;line-height:16px;box-shadow:0 0 1px #888,0 12px 30px #0009;overflow:hidden;--chev-weight:.7px}
.dlg-title{flex:none;height:30px;background:#ebf3f7;display:flex;align-items:center;padding:0 17px 0 8px}
.dlg-title span{flex:1}
.dlg-title button{display:flex;font-size:14px}
.dlg-title button+button{margin-left:35px}
.dlg-tabs{flex:none;height:29px;padding:9px 0 0 8px;display:grid;grid-template-columns:56px 73px 53px 54px 53px 70px}
.dlg-tabs button{border:1px solid #e0e0e0;border-left:0;border-bottom:0;background:#f4f4f4}
.dlg-tabs .on{background:#fafafa;margin-top:-2px}
.dlg-tabs .on span{outline:1px dotted #000;padding:0 4px}
.panel{flex:1;margin:0 8px 0 6px;border:1px solid #e0e0e0;background:#fafafa;display:grid;grid-template-columns:1fr 121px;gap:9px;padding:7px 7px 0 7px;align-items:start}
h2{display:flex;align-items:center;gap:6px;line-height:16px;white-space:nowrap}
h2::after{content:"";flex:1;height:1px;background:#d8d8d8}
.align{display:flex;gap:9px;padding:4px 0 0 10px}
.stack{display:flex;flex-direction:column;align-items:flex-start}
.stack label{line-height:16px;margin-bottom:1px}
.stack .combo+label{margin-top:2px}
.indent{padding-top:20px}
.dim{color:#7a7a72}
.combo{width:149px;height:22px;border:1px solid #adadad;background:#fff;position:relative}
.combo.narrow{width:98px}
.combo select{width:100%;height:20px;padding-left:3px;appearance:none}
.combo svg{position:absolute;right:1px;top:1px;width:17px;height:18px;padding:3px 2px;border:1px solid #ccc;background:#fff;color:#555;pointer-events:none}
.spin{width:59px;height:20px;border:1px solid #adadad;background:#fff;display:flex}
.spin input{flex:1;width:0;padding-left:4px}
.spin span{width:16px;display:flex;flex-direction:column}
.spin button{flex:1;border:1px solid #ccc;background:#f4f4f4;font-size:7px;line-height:7px}
.check{display:flex;align-items:center;gap:5px;line-height:19px}
.check input{appearance:none;width:13px;height:13px;border:1px solid #666;border-radius:3px;background:#f6f6f6}
.check.dim input{border-color:#c4c4c4}
.check .mixed{background:#0067c0;border-color:#0067c0;display:flex;align-items:center;justify-content:center}
.mixed::before{content:"";width:5px;height:1px;background:#fff}
.just{padding:2px 0 5px 10px}
.checks{padding:3px 0 5px 10px}
.dir{padding:5px 0 0 10px}
.orient{margin:0;border:1px solid #dcdcdc;padding:8px 0 4px 8px;min-width:0;height:171px}
.orient legend{padding:0 2px;margin-left:-4px;height:12px;line-height:14px}
.dials{display:flex;gap:4px}
.vert{width:24px;height:123px;border:1px solid #888;background:#fff;line-height:13px}
.dial{width:64px;height:123px;border:1px solid #888;background:#fff}
.dial svg{display:block}
.dial-text{font-size:11px}
.deg{display:flex;gap:3px;margin-top:3px;align-items:center}
.actions{flex:none;height:40px;display:flex;justify-content:flex-end;gap:10px;padding:10px 7px}
.actions button{width:74px;height:22px;background:#fdfdfd;border:1px solid #d0d0d0;border-radius:4px}
.actions .ok{border-color:#0067c0}

/* sheet tabs */
.sheet-tabs{flex:none;height:32px;border-top:1px solid #444;border-bottom:1px solid #333;display:flex;align-items:center;padding:0 22px 0 15px}
.arrow{width:33px;display:flex;justify-content:center}
.tabs{align-self:stretch;display:grid;grid-template-columns:84px 110px 80px 89px 89px 98px 68px 87px 129px 132px;margin-left:30px}
.tabs a{text-align:center;line-height:32px;white-space:nowrap;background:linear-gradient(#555,#555) right 50%/1px 18px no-repeat}
.tabs .on{background:#fff;color:#222;font-weight:600;margin:-1px 4px 4px;border-radius:0 0 5px 5px}
.tabs .on span{display:inline-block;border-bottom:2px solid #217346;line-height:20px;margin-top:3px}
.tb{width:32px;text-align:center;display:flex;justify-content:center;font-size:9px}
span.tb{font-size:14px}
.hscroll{flex:1;height:16px;border-radius:8px;background:#141414;display:flex;align-items:center;padding:0 3px}
.lt{border-left:0;border-right:7px solid #999}
.rt{border-right:0;border-left:7px solid #999;margin-left:auto}
.hscroll .thumb{width:61%;height:9px;border-radius:4px;background:#9a9a9a;margin-left:5px}

/* status */
.status{flex:none;height:22px;background:#141414;border-bottom:1px solid #333;display:flex;align-items:center;font-size:11px;padding:0 7px 0 11px}
.ready{width:51px}
.macro{margin-right:18px}
.acc{margin-right:4px}
.status b{flex:1;font-weight:600}
.count{margin-right:15px}
.views{display:flex;align-self:stretch;margin-right:5px}
.views button{width:40px;display:flex;align-items:center;justify-content:center}
.views .on{background:#2a2a2a}
.zoom-step{width:10px;font-size:15px}
.zoom{width:108px;height:16px;appearance:none;background:linear-gradient(#aaa,#aaa) 50%/100px 1px no-repeat}
.zoom::-webkit-slider-thumb{appearance:none;width:5px;height:11px;background:#ccc}
.pct{width:39px;text-align:right}

/* taskbar */
.taskbar{flex:none;height:48px;background:#1f2326;display:grid;grid-template-columns:1fr auto 1fr;align-items:center;padding:0 20px}
.weather{display:flex;gap:4px;align-items:center}
.weather p,.taskbar time{font-size:11px}
.weather p span{color:#c4c4c4}
.badge{font-size:10px;fill:#222}
.center{display:flex;align-items:center;padding-left:8px}
.center>button{width:44px;height:39px;display:flex;align-items:center;justify-content:center;position:relative}
.center .start{width:24px;margin-right:12px}
.task-search{width:220px;height:32px;border-radius:16px;background:#424447;display:flex;align-items:center;gap:10px;padding-left:11px;margin-right:3px}
.task-search input{width:160px}
.task-search input::placeholder{color:#c8c8c8;opacity:1}
.run::after{content:"";position:absolute;bottom:0;width:6px;height:3px;border-radius:2px;background:#999}
.center .cur{width:40px;background:#33373a;border-radius:4px}
.cur::after{width:16px;background:#5fd05a}
.taskbar time{text-align:right}
```
FILE: sheet.js
```js
// week | week-ending | due | top P/N | description | job | SO | qty | drawing | routing | order | tables | customer column | amount | week end | running total
const LINES = `
-5|05/15|05/13|IND B-21528|FA1- BRKT REG||||||49771|0|AE|$105|05/15|$105
|||IND B-31017|FA1- REAR PAN||||||49771|0|AE|#N/A|#N/A|#N/A
|||IND B-31026|FA1- BRKT STE||||||49771|0|AE|$494|05/15|#N/A
|||IND B-31038|FA1- COVER CH||||||49771|0|AE|$396|05/15|#N/A
-4|05/22|05/22|THY K.00636.613.01.00|FA2-STAND||||||49892|0|AE|$1,806|05/22|$1,806
-3|05/29|05/25|RIZ 2025-198-200|FA1-HEADER S||||||49847|0|AE|$832|05/29|$832
|||RIZ 2025-198-300|FA1-ROOF PAN||||||49847|0|AE|$1,706|05/29|$2,538
||05/26|AM A180320-3-1|TABLE 30 X 70 X||||||49684|18|AA|$6,907|05/29|$9,445
||05/29|RIZ 2025-198-000|BASE WELDMENT||||||49315|0|AE|$10,486|05/29|$19,931
-2|06/05|06/01|AM A141016-6-2|PANEL, 14GA, L||||||49726|0|AA|$4,319|06/05|$4,319
|||AM A180320-3-1|TABLE 30 X 70 X||||||49677|30|AA|$11,512|06/05|$15,831
|||AM A180609-9-1|LPTP TRAY, 12GA||||||49692|0|AA|$533|06/05|$16,365
|||AM A851011-10-3|LOAD BLOCK, W||||||49817|0|AA|$3,274|06/05|$19,638
|||AM A970901-1-5|SIGN, PNT||||||49726|0|AA|$1,493|06/05|$21,131
||06/02|LLC HAR 460551|RL SLATWALL S||||||49968|0|AE|$5,842|06/05|$26,973
|||LLC HAR 460552|LH SLATWALL S||||||49968|0|AE|$5,888|06/05|$32,861
|||LLC HAR 460559|UNIT MEDAL HE||||||49968|0|AE|$2,786|06/05|$35,647
|||LLC HAR 460614|FLANGED DOOR||||||49968|0|AE|$7,052|06/05|$42,699
|||LLC HAR 460619-B|MAIN BODY WE||||||49968|0|AE|$20,452|06/05|$63,150
||06/03|AM A141016-3-1|PTD BLUE LEFT||||||50045|0|AA|$8,078|06/05|$71,228
||06/04|FIV LK003962-003|KIT,LPS,CONV S||||||49626|0|AB|$4,767|06/05|$75,995
-1|06/12|06/08|AM A851011-10-6|BTM PNL, 16GA||||||49726|0|AA|$394|06/12|$394
||||PNL LATCH, W, ||||||49817|0|AA|$2,690|06/12|$3,084
||||END, 20GA GLZ||||||49917|0|AA|$489|06/12|$3,573
||||REAR COVER, ||||||49834|0|AA|$586|06/12|$4,159
||||MID CVR PNL, 12||||||50045|0|AA|$1,801|06/12|$5,960
||||RH PNL BKT, 12GA, L-|90623-0000|49834|20|P011101-00|QC-L-F|49834|0|AA|$352|06/12|$6,312
||||TEL ENC,16GA,304-3F,|90624-0000|49834|40|P011104-00|L-O-O-F-W|49834|0|AA|$4,304|06/12|$10,616
||||144" SEG8 FRAME (POW|90527-0000|49837|420|025007|PT|49837|0|AE|$1,537|06/12|$12,154
||||144" SEG8 FRAME (POW|90529-0000|49837|1075|025007|PT|49837|0|AE|$4,698|06/12|$16,851
||||116.5" SEG8 FRAME (P|90528-0000|49837|1020|025007|PT|49837|0|AE|$6,640|06/12|$23,492
||||SET ALUMINUM REEL, 3|90613-0000|49741|50|33026-1|L-F-W|49741|0|AE|$3,792|06/12|$27,284
||||WELDMENT DOOR MAIN|90727-0000|49045|9|16189|QC-W-G-PT|49045|0|AE|$7,524|06/12|$34,807
||||FA1 PANEL BOTTOM D|90420-0000|49585|95|16494|QC-L-O-F-PT|49585|0|AE|$8,327|06/12|$43,134
||||FA1 - BACKING PLATE|90429-0000|49611|95|16507|QC-L-F-O|49611|0|AE|$1,100|06/12|$44,234
||||FA1 BRKT DOOR MAIN|90421-0000|49587|95|16496|QC-L-F-PT|49587|0|AE|$846|06/12|$45,079
||||FA1 RETENTION BRKT|90422-0000|49587|95|16496|QC-L|49587|0|AE|$133|06/12|$45,212
||||FA1 PRESENTER BRKT|90423-0000|49587|95|16496|QC-L-F|49587|0|AE|$905|06/12|$46,118
|||ECO 270816|FA1 LCD MAIN BOX|90731-0000|49586|95|16497|QC-W-PT-O|49586|0|AE|$13,191|06/12|$59,309
|||ECO 270817|FA1 PRESENTER BRKT|90424-0000|49587|95|16496|QC-L-F|49587|0|AE|$1,624|06/12|$60,932`.slice(1).split('\n').map(l => l.split('|'));
const CUMULATIVE = [322, 380, 443, 505, 567, 629, 691, 753, 815, 877];
const HIGHLIGHT = [12, 15];

const body = document.getElementById('lines');
LINES.forEach((v, n) => {
  const row = n + 5, next = LINES[n + 1] || [];
  const tr = body.insertRow();
  if (HIGHLIGHT.includes(row)) tr.className = 'hot';
  const head = document.createElement('th');
  head.textContent = row;
  tr.append(head);
  const add = (text, cls) => {
    const td = tr.insertCell();
    td.textContent = text || '';
    td.className = cls + (text === '#N/A' && !cls.includes('noerr') ? ' err' : '');
  };
  add(v[0], 'paint ln r' + (next[0] ? ' rule' : ' open'));
  add(v[1], 'paint ln r' + (next[0] ? ' rule' : ' open'));
  add(v[2], 'paint ln r gr' + (next[2] ? ' rule' : ' open'));
  add(v[3], 'sel ln full er');
  add(v[4], 'paint ln full');
  add(v[5], 'paint ln full');
  add(v[6], 'paint ln full');
  add(v[7], 'paint ln full r');
  add(v[8], 'paint ln full k2');
  add(v[9], 'paint bk s11');
  add('', 'paint');
  add(v[13], 'paint r s12 noerr');
  const we = v[14], bad = we === '#N/A';
  add(bad ? we : we + '/26', bad ? 'paint r s12' : 'paint r s11');
  add(v[15], 'paint r s12');
  add('', 'paint');
  add('', 'paint');
  add(v[10], 'paint r');
  add(v[11], 'paint r');
  add('0', 'paint r');
  ['AA', 'AB', 'AC', 'AD', 'AE'].forEach(c => add(c === v[12] ? v[13] : '$0', 'paint r'));
  add(bad ? we : we.split('/').map(Number).join('/') + '/2026', 'paint r');
  add('', 'paint');
  add(CUMULATIVE[n], CUMULATIVE[n] ? 'green r' : '');
  add(n < 10 ? row : '', 'r');
  add('', '');
});
```
